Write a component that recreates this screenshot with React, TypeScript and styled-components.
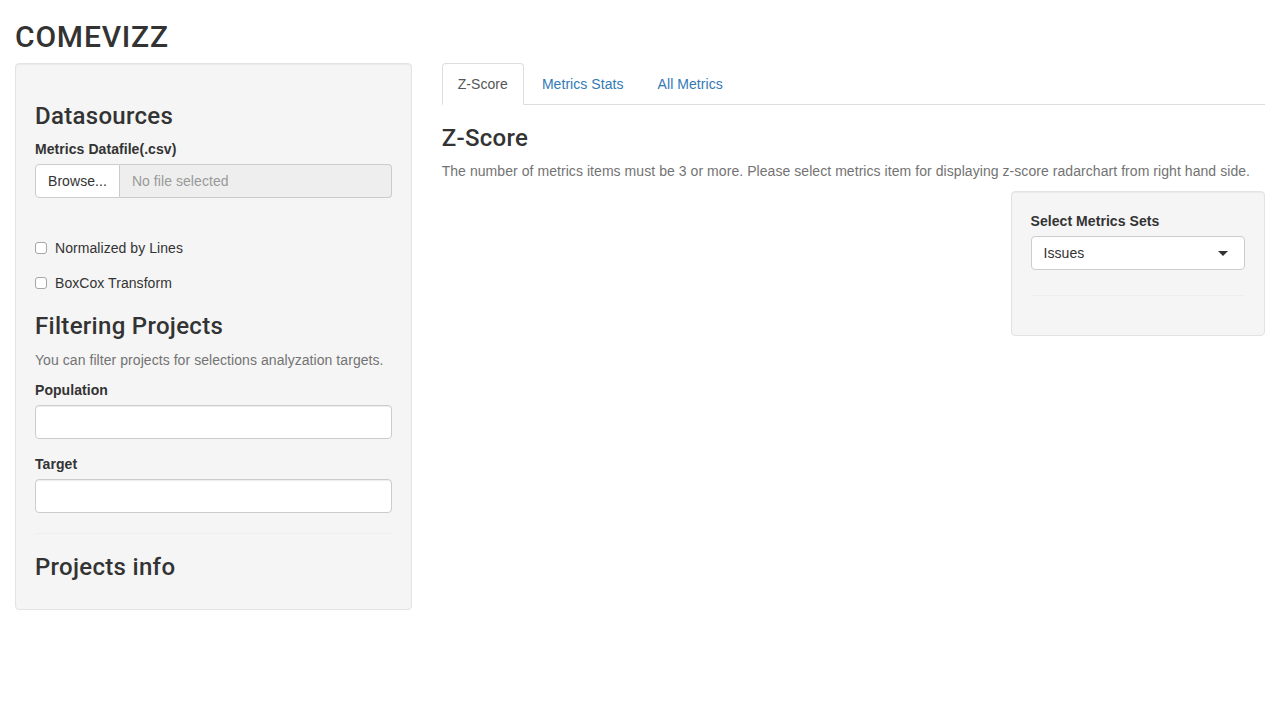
import React from "react";
import styled, { createGlobalStyle } from "styled-components";

const GlobalStyle = createGlobalStyle`
  *, *::before, *::after { box-sizing: border-box; }
  html, body { margin: 0; padding: 0; background: #fff; }
  body {
    font-family: "Liberation Sans", Arial, Helvetica, sans-serif;
    font-size: 14px;
    line-height: 1.42857143;
    letter-spacing: 0.06px;
    color: #333;
  }
`;

const Container = styled.div`
  padding: 0 15px;
`;

const Title = styled.h2`
  font-family: Roboto, "Liberation Sans", Arial, sans-serif;
  font-size: 30px;
  font-weight: 500;
  line-height: 1.1;
  letter-spacing: 0.8px;
  margin: 20px 0 10px;
  color: #333;
`;

const Row = styled.div`
  display: flex;
  margin: 0 -15px;
  align-items: flex-start;
`;

const Col = styled.div<{ $span: number }>`
  width: ${(p) => (p.$span / 12) * 100}%;
  padding: 0 15px;
  min-height: 1px;
`;

const Well = styled.div`
  background: #f5f5f5;
  border: 1px solid #e3e3e3;
  border-radius: 4px;
  padding: 19px;
  margin-bottom: 20px;
  box-shadow: inset 0 1px 1px rgba(0, 0, 0, 0.05);
  display: flow-root;
`;

const H3 = styled.h3`
  font-family: Roboto, "Liberation Sans", Arial, sans-serif;
  font-size: 24px;
  font-weight: 500;
  line-height: 1.1;
  letter-spacing: 0.3px;
  margin: 20px 0 10px;
  color: #333;
`;

const FormGroup = styled.div<{ $mb?: number }>`
  margin-bottom: ${(p) => p.$mb ?? 15}px;
`;

const Label = styled.label`
  display: block;
  font-weight: bold;
  margin-bottom: 5px;
  max-width: 100%;
`;

const InputGroup = styled.div`
  display: flex;
  height: 34px;
`;

const BrowseButton = styled.span`
  display: inline-flex;
  align-items: center;
  padding: 6px 12px;
  background: #fff;
  border: 1px solid #ccc;
  border-radius: 4px 0 0 4px;
  color: #333;
  white-space: nowrap;
`;

const FileName = styled.span`
  flex: 1;
  display: flex;
  align-items: center;
  padding: 6px 12px;
  background: #eee;
  border: 1px solid #ccc;
  border-left: none;
  border-radius: 0 4px 4px 0;
  color: #999;
`;

const CheckboxWrap = styled.div`
  margin: 10px 0;
`;

const CheckLabel = styled.label`
  display: flex;
  align-items: center;
  min-height: 20px;
  font-weight: normal;
  cursor: pointer;
`;

const Box = styled.span`
  width: 12px;
  height: 12px;
  margin: 0 8px 0 0;
  border: 1px solid #a6a6a6;
  border-radius: 3px;
  background: #fff;
  flex: none;
`;

const HelpText = styled.p`
  color: #737373;
  margin: 0 0 10px;
`;

const TextInput = styled.div`
  height: 34px;
  width: 100%;
  background: #fff;
  border: 1px solid #ccc;
  border-radius: 4px;
  box-shadow: inset 0 1px 1px rgba(0, 0, 0, 0.075);
`;

const Hr = styled.hr<{ $mt?: number }>`
  margin: ${(p) => p.$mt ?? 20}px 0 20px;
  border: 0;
  border-top: 1px solid #eee;
  height: 0;
`;

const Tabs = styled.ul`
  list-style: none;
  display: flex;
  margin: 0;
  padding: 0;
  border-bottom: 1px solid #ddd;
`;

const Tab = styled.li<{ $active?: boolean }>`
  margin-right: 2px;
  margin-bottom: -1px;
  padding: 10px 15px;
  line-height: 20px;
  border: 1px solid ${(p) => (p.$active ? "#ddd" : "transparent")};
  border-bottom-color: transparent;
  border-radius: 4px 4px 0 0;
  background: ${(p) => (p.$active ? "#fff" : "transparent")};
  color: ${(p) => (p.$active ? "#555" : "#337ab7")};
  cursor: pointer;
`;

const TabPane = styled.div`
  display: flow-root;
`;

const SelectBox = styled.div`
  position: relative;
  height: 34px;
  display: flex;
  align-items: center;
  padding: 0 12px;
  background: #fff;
  border: 1px solid #ccc;
  border-radius: 4px;
  color: #333;
`;

const Caret = styled.span`
  position: absolute;
  right: 16px;
  top: 14px;
  width: 0;
  height: 0;
  border-left: 5px solid transparent;
  border-right: 5px solid transparent;
  border-top: 5px solid #333;
`;

const Checkbox = ({ label }: { label: string }) => (
  <FormGroup>
    <CheckboxWrap>
      <CheckLabel>
        <Box />
        <span>{label}</span>
      </CheckLabel>
    </CheckboxWrap>
  </FormGroup>
);

export default function App() {
  return (
    <>
      <GlobalStyle />
      <Container>
        <Title>COMEVIZZ</Title>
        <Row>
          <Col $span={4}>
            <Well>
              <H3>Datasources</H3>
              <FormGroup $mb={40}>
                <Label>Metrics Datafile(.csv)</Label>
                <InputGroup>
                  <BrowseButton>Browse...</BrowseButton>
                  <FileName>No file selected</FileName>
                </InputGroup>
              </FormGroup>
              <Checkbox label="Normalized by Lines" />
              <Checkbox label="BoxCox Transform" />
              <H3>Filtering Projects</H3>
              <HelpText>You can filter projects for selections analyzation targets.</HelpText>
              <FormGroup>
                <Label>Population</Label>
                <TextInput />
              </FormGroup>
              <FormGroup>
                <Label>Target</Label>
                <TextInput />
              </FormGroup>
              <Hr />
              <H3>Projects info</H3>
            </Well>
          </Col>
          <Col $span={8}>
            <Tabs>
              <Tab $active>Z-Score</Tab>
              <Tab>Metrics Stats</Tab>
              <Tab>All Metrics</Tab>
            </Tabs>
            <TabPane>
              <H3>Z-Score</H3>
              <HelpText>
                The number of metrics items must be 3 or more. Please select metrics item for
                displaying z-score radarchart from right hand side.
              </HelpText>
              <Row>
                <Col $span={8} />
                <Col $span={4}>
                  <Well>
                    <FormGroup $mb={0}>
                      <Label>Select Metrics Sets</Label>
                      <SelectBox>
                        Issues
                        <Caret />
                      </SelectBox>
                    </FormGroup>
                    <Hr $mt={25} />
                  </Well>
                </Col>
              </Row>
            </TabPane>
          </Col>
        </Row>
      </Container>
    </>
  );
}
